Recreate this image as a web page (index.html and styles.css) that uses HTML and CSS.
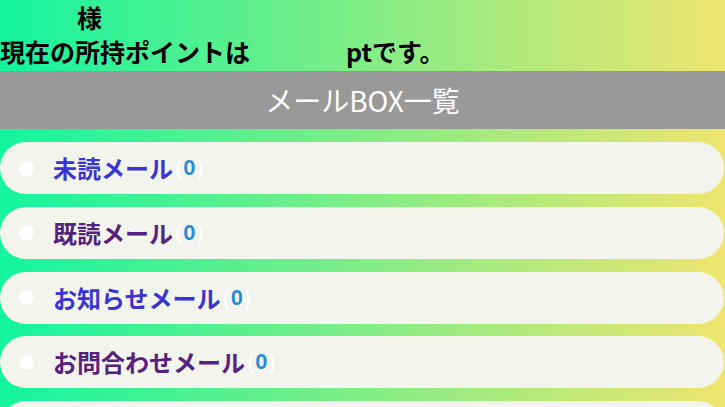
FILE: index.html
```html
<!DOCTYPE html>
<html lang="ja">
<head>
<meta charset="utf-8">
<title>メールBOX一覧</title>
<link rel="stylesheet" href="styles.css">
</head>
<body>
<div class="page">
  <div class="user-info">
    <p class="line"><span class="name"></span>様</p>
    <p class="line">現在の所持ポイントは<span class="points"></span>ptです。</p>
  </div>
  <h1 class="title">メールBOX一覧</h1>
  <ul class="mail-list">
    <li class="mail-item"><span class="dot"></span><a class="mail-link" href="#">未読メール</a><span class="count"><span class="paren">(</span><span class="num">0</span><span class="paren">)</span></span></li>
    <li class="mail-item"><span class="dot"></span><a class="mail-link visited" href="#">既読メール</a><span class="count"><span class="paren">(</span><span class="num">0</span><span class="paren">)</span></span></li>
    <li class="mail-item"><span class="dot"></span><a class="mail-link" href="#">お知らせメール</a><span class="count"><span class="paren">(</span><span class="num">0</span><span class="paren">)</span></span></li>
    <li class="mail-item"><span class="dot"></span><a class="mail-link visited" href="#">お問合わせメール</a><span class="count"><span class="paren">(</span><span class="num">0</span><span class="paren">)</span></span></li>
    <li class="mail-item"><span class="dot"></span><a class="mail-link" href="#">送信メール</a><span class="count"><span class="paren">(</span><span class="num">0</span><span class="paren">)</span></span></li>
  </ul>
</div>
</body>
</html>
```
FILE: styles.css
```css
html, body {
  margin: 0;
  padding: 0;
}
body {
  font-family: "Noto Sans CJK JP", "Noto Sans", sans-serif;
  background: linear-gradient(to right, #12f59e 0%, #efe56e 100%);
  min-height: 407px;
  overflow: hidden;
}
.page {
  display: flex;
  flex-direction: column;
}
.user-info {
  height: 71px;
  display: flex;
  flex-direction: column;
}
.line {
  margin: 0;
  font-size: 25px;
  font-weight: bold;
  line-height: 34px;
  color: #000;
  white-space: nowrap;
}
.name {
  display: inline-block;
  width: 77px;
}
.points {
  display: inline-block;
  width: 96px;
}
.title {
  margin: 0;
  height: 58px;
  background: #999999;
  color: #ffffff;
  font-size: 28px;
  font-weight: normal;
  display: flex;
  align-items: center;
  justify-content: center;
}
.mail-list {
  list-style: none;
  margin: 13px 0 0 0;
  padding: 0;
  display: flex;
  flex-direction: column;
  gap: 12.75px;
}
.mail-item {
  height: 52px;
  margin-right: 1px;
  border-radius: 26px;
  background: #f4f4ee;
  display: flex;
  align-items: center;
  padding-left: 19px;
}
.dot {
  width: 15px;
  height: 15px;
  border-radius: 50%;
  background: #ffffff;
  margin-right: 19px;
  flex-shrink: 0;
}
.mail-link {
  font-size: 24px;
  line-height: 24px;
  font-weight: bold;
  color: #3b34d4;
  text-decoration: none;
  white-space: nowrap;
}
.mail-link.visited {
  color: #55237f;
}
.count {
  font-family: "Liberation Sans", sans-serif;
  font-size: 22px;
  line-height: 24px;
  font-weight: bold;
  margin-left: 2px;
}
.paren {
  color: #ffffff;
  text-shadow: 0 0 1px #e0e0e0;
}
.num {
  color: #2b8ad4;
  text-shadow: 0 0 2px #ffffff, 0 0 1px #ffffff;
  padding: 0 1px;
}
```
